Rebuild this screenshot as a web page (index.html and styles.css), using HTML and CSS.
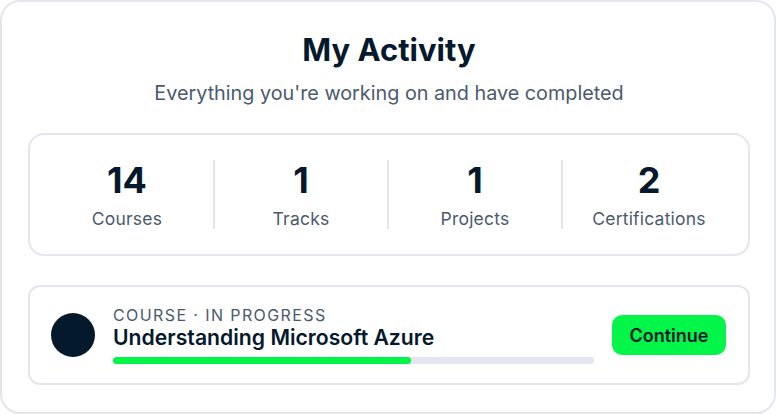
FILE: index.html
```html
<!DOCTYPE html>
<html lang="en">
  <head>
    <meta charset="UTF-8" />
    <meta name="viewport" content="width=device-width, initial-scale=1.0" />
    <title>My Activity</title>
    <link rel="stylesheet" href="styles.css">
  </head>
  <body>
    <main class="kort">
      <h1>My Activity</h1>
      <p class="undertekst">Everything you're working on and have completed</p>

      <section class="stats">
        <div class="stat">
          <strong>14</strong>
          <span>Courses</span>
        </div>
        <div class="stat">
          <strong>1</strong>
          <span>Tracks</span>
        </div>
        <div class="stat">
          <strong>1</strong>
          <span>Projects</span>
        </div>
        <div class="stat">
          <strong>2</strong>
          <span>Certifications</span>
        </div>
      </section>

      <section class="kursus">
        <div class="cirkel"></div>
        <div class="info">
          <p class="type">COURSE · IN PROGRESS</p>
          <h2>Understanding Microsoft Azure</h2>
          <div class="bar"><div class="fyld"></div></div>
        </div>
        <button>Continue</button>
      </section>
    </main>
  </body>
</html>
```

FILE: styles.css
```css
* {
  box-sizing: border-box;
}

body {
  margin: 0;
  background-color: #fff;
  font-family: "Inter", "Liberation Sans", sans-serif;
  color: #05192d;
}

.kort {
  width: 776px;
  height: 414px;
  border: 2px solid #e5e5f0;
  border-radius: 20px;
  padding: 29px 24px 0 26px;
}

h1 {
  margin: 0;
  font-size: 31px;
  line-height: 38px;
  font-weight: 700;
  text-align: center;
}

.undertekst {
  margin: 12px 0 0;
  font-size: 19.8px;
  line-height: 24px;
  text-align: center;
  color: #4a5a6e;
}

.stats {
  display: grid;
  grid-template-columns: repeat(4, 174px);
  height: 123px;
  margin-top: 28px;
  padding: 25px 0 0 9px;
  border: 2px solid #e5e5f0;
  border-radius: 16px;
}

.stat {
  display: flex;
  flex-direction: column;
  align-items: center;
  height: 69px;
  border-left: 2px solid #e5e5f0;
}

.stat:first-child {
  border-left-color: transparent;
}

.stat strong {
  font-size: 36px;
  line-height: 40px;
  font-weight: 700;
}

.stat span {
  margin-top: 8px;
  font-size: 17.5px;
  line-height: 22px;
  letter-spacing: 0.2px;
  color: #4a5a6e;
}

.kursus {
  display: flex;
  align-items: center;
  height: 100px;
  margin-top: 29px;
  padding: 0 22px 0 21px;
  border: 2px solid #e5e5f0;
  border-radius: 12px;
}

.cirkel {
  flex: none;
  width: 44px;
  height: 44px;
  border-radius: 50%;
  background-color: #05192d;
}

.info {
  width: 481px;
  margin-left: 18px;
}

.type {
  margin: 0;
  font-size: 16px;
  line-height: 18px;
  letter-spacing: 1.4px;
  color: #4a5a6e;
}

h2 {
  margin: 0;
  font-size: 21.2px;
  line-height: 26px;
  font-weight: 600;
}

.bar {
  height: 7px;
  margin-top: 7px;
  border-radius: 4px;
  background-color: #e5e5f0;
}

.fyld {
  width: 62%;
  height: 100%;
  border-radius: 4px;
  background-color: #02f548;
}

button {
  width: 114px;
  height: 40px;
  margin-left: auto;
  border: none;
  border-radius: 10px;
  background-color: #02f548;
  color: #05192d;
  font-family: inherit;
  font-size: 18px;
  font-weight: 600;
}
```
